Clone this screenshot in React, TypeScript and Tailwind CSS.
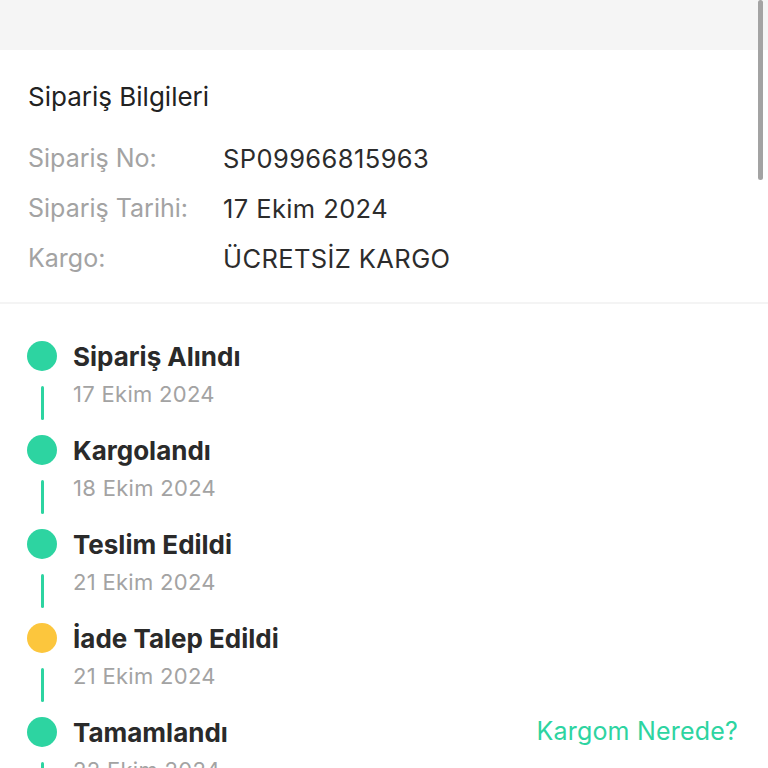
import React from "react";

const rows = [
  { label: "Sipariş No:", value: "SP09966815963" },
  { label: "Sipariş Tarihi:", value: "17 Ekim 2024" },
  { label: "Kargo:", value: "ÜCRETSİZ KARGO" },
];

const steps = [
  { title: "Sipariş Alındı", date: "17 Ekim 2024", color: "bg-[#2dd4a1]" },
  { title: "Kargolandı", date: "18 Ekim 2024", color: "bg-[#2dd4a1]" },
  { title: "Teslim Edildi", date: "21 Ekim 2024", color: "bg-[#2dd4a1]" },
  { title: "İade Talep Edildi", date: "21 Ekim 2024", color: "bg-[#fcc63d]" },
  { title: "Tamamlandı", date: "22 Ekim 2024", color: "bg-[#2dd4a1]", link: true },
];

export default function App() {
  return (
    <div
      className="relative w-[768px] h-[768px] overflow-hidden bg-white"
      style={{ fontFamily: "Inter, 'Noto Sans', sans-serif" }}
    >
      <div className="h-[50px] bg-[#f5f5f5]" />
      <div className="px-[28px] pt-[31px] pb-[18px]">
        <div className="text-[26px] leading-[32px] text-[#222]">Sipariş Bilgileri</div>
        <div className="mt-[21px] flex flex-col">
          {rows.map((r) => (
            <div key={r.label} className="flex items-center h-[50px]">
              <span className="w-[195px] text-[25px] text-[#a3a3a3]">{r.label}</span>
              <span className="text-[25.5px] tracking-[0.4px] text-[#2c2c2c]">{r.value}</span>
            </div>
          ))}
        </div>
      </div>
      <div className="h-[2px] bg-[#f4f4f4]" />
      <div className="pt-[37px] pl-[27px] pr-[30px] flex flex-col">
        {steps.map((s) => (
          <div key={s.title} className="flex flex-col">
            <div className="flex items-center h-[30px]">
              <div className={`w-[30px] h-[30px] rounded-full ${s.color}`} />
              <div className="ml-[16px] flex-1 text-[26px] font-bold text-[#2a2a2a]">{s.title}</div>
              {s.link && (
                <div className="text-[25px] tracking-[0.2px] text-[#2dd4a1]">Kargom Nerede?</div>
              )}
            </div>
            <div className="flex h-[64px]">
              <div className="w-[30px] flex items-center justify-center">
                <div className="w-[3px] h-[34px] rounded-full bg-[#2dd4a1]" />
              </div>
              <div className="ml-[16px] mt-[8px] text-[22px] tracking-[0.3px] leading-[30px] text-[#a3a3a3]">
                {s.date}
              </div>
            </div>
          </div>
        ))}
      </div>
      <div className="absolute right-[5px] top-0 w-[5px] h-[180px] rounded-full bg-[#a3a3a3]" />
    </div>
  );
}
